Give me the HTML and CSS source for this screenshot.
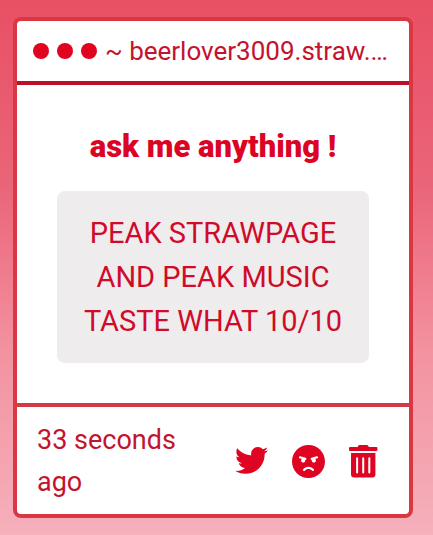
FILE: index.html
```
<!DOCTYPE html>
<html lang="en">
<head>
  <meta charset="UTF-8">
  <meta name="viewport" content="width=device-width, initial-scale=1.0">
  <title>ask me anything !</title>
  <link rel="stylesheet" href="styles.css">
</head>
<body>
  <main class="card">
    <header class="card-header">
      <span class="dot"></span>
      <span class="dot"></span>
      <span class="dot"></span>
      <span class="site">~ beerlover3009.straw.page</span>
    </header>

    <section class="card-body">
      <h1 class="title">ask me anything !</h1>
      <p class="message">PEAK STRAWPAGE AND PEAK MUSIC TASTE WHAT 10/10</p>
    </section>

    <footer class="card-footer">
      <span class="time">33 seconds ago</span>
      <div class="actions">
        <button class="action" type="button" aria-label="Share on Twitter">
          <svg viewBox="0 16 512 512">
            <path d="M459.37 151.716c.325 4.548.325 9.097.325 13.645 0 138.72-105.583 298.558-298.558 298.558-59.452 0-114.68-17.219-161.137-47.106 8.447.974 16.568 1.299 25.34 1.299 49.055 0 94.213-16.568 130.274-44.832-46.132-.975-84.792-31.188-98.112-72.772 6.498.974 12.995 1.624 19.818 1.624 9.421 0 18.843-1.3 27.614-3.573-48.081-9.747-84.143-51.98-84.143-102.985v-1.299c13.969 7.797 30.214 12.67 47.431 13.319-28.264-18.843-46.781-51.005-46.781-87.391 0-19.492 5.197-37.36 14.294-52.954 51.655 63.675 129.3 105.258 216.365 109.807-1.624-7.797-2.599-15.918-2.599-24.04 0-57.828 46.782-104.934 104.934-104.934 30.213 0 57.502 12.67 76.67 33.137 23.715-4.548 46.456-13.32 66.599-25.34-7.798 24.366-24.366 44.833-46.132 57.827 21.117-2.273 41.584-8.122 60.426-16.243-14.292 20.791-32.161 39.308-52.628 54.253z"/>
          </svg>
        </button>
        <button class="action" type="button" aria-label="Report">
          <svg viewBox="0 8 496 496">
            <path d="M248 8C111 8 0 119 0 256s111 248 248 248 248-111 248-248S385 8 248 8zM136 240c0-9.3 4.1-17.5 10.5-23.4l-31-9.3c-8.5-2.5-13.3-11.5-10.7-19.9 2.5-8.5 11.4-13.2 19.9-10.7l80 24c8.5 2.5 13.3 11.5 10.7 19.9-2.1 6.9-8.4 11.4-15.3 11.4-.5 0-1.1-.2-1.7-.2.7 2.7 1.7 5.3 1.7 8.2 0 17.7-14.3 32-32 32S136 257.7 136 240zm168 154.2c-27.8-33.4-84.2-33.4-112.1 0-13.5 16.3-38.2-4.2-24.6-20.5 20-24 49.4-37.6 80.6-37.6s60.6 13.6 80.6 37.6c13.8 16.5-11.1 36.6-24.5 20.5zm76.6-186.9l-31 9.3c6.3 5.8 10.5 14.1 10.5 23.4 0 17.7-14.3 32-32 32s-32-14.3-32-32c0-2.9.9-5.6 1.7-8.2-.6.1-1.1.2-1.7.2-6.9 0-13.2-4.5-15.3-11.4-2.5-8.5 2.3-17.4 10.7-19.9l80-24c8.4-2.5 17.4 2.3 19.9 10.7 2.5 8.5-2.3 17.4-10.8 19.9z"/>
          </svg>
        </button>
        <button class="action" type="button" aria-label="Delete">
          <svg viewBox="0 0 520 520">
            <path d="M32 464a48 48 0 0 0 48 48h288a48 48 0 0 0 48-48V128H32zm272-256a16 16 0 0 1 32 0v224a16 16 0 0 1-32 0zm-96 0a16 16 0 0 1 32 0v224a16 16 0 0 1-32 0zm-96 0a16 16 0 0 1 32 0v224a16 16 0 0 1-32 0zM432 32H312l-9.4-18.7A24 24 0 0 0 281.1 0H166.8a23.72 23.72 0 0 0-21.4 13.3L136 32H16A16 16 0 0 0 0 48v32a16 16 0 0 0 16 16h416a16 16 0 0 0 16-16V48a16 16 0 0 0-16-16z"/>
          </svg>
        </button>
      </div>
    </footer>
  </main>
</body>
</html>
```
FILE: styles.css
```
* {
  box-sizing: border-box;
  margin: 0;
  padding: 0;
}

html {
  min-height: 100%;
  background: linear-gradient(#e95064, #ea6579 35%, #f3919f 65%, #f5b1bc);
}

body {
  padding: 17px 20px 17px 13px;
  font-family: Roboto, "Liberation Sans", sans-serif;
  font-size: 26px;
  color: #c4122f;
}

.card {
  background: #fff;
  border: 4px solid #d93843;
  border-radius: 8px;
}

.card-header {
  display: flex;
  align-items: center;
  gap: 8px;
  padding: 10px 20px 10px 16px;
  border-bottom: 4px solid #bd0f28;
}

.dot {
  flex: none;
  width: 16px;
  height: 16px;
  border-radius: 50%;
  background: #e00420;
}

.site {
  min-width: 0;
  line-height: 40px;
  white-space: nowrap;
  overflow: hidden;
  text-overflow: ellipsis;
}

.card-body {
  padding: 40px;
  text-align: center;
}

.title {
  margin-bottom: 22px;
  font-size: 31px;
  font-weight: 900;
  line-height: 44px;
  color: #dc0424;
}

.message {
  padding: 20px;
  border-radius: 8px;
  background: #eeecec;
  font-size: 29px;
  line-height: 44px;
  color: #d00a2a;
}

.card-footer {
  display: flex;
  align-items: center;
  justify-content: space-between;
  gap: 20px;
  padding: 12px 27px 11px 20px;
  border-top: 4px solid #d23a48;
}

.time {
  max-width: 160px;
  font-size: 27px;
  line-height: 42px;
}

.actions {
  display: flex;
  gap: 24px;
}

.action {
  width: 33px;
  height: 33px;
  border: none;
  background: none;
  color: #de0422;
  cursor: pointer;
}

.action svg {
  display: block;
  width: 100%;
  height: 100%;
  fill: currentColor;
}
```
